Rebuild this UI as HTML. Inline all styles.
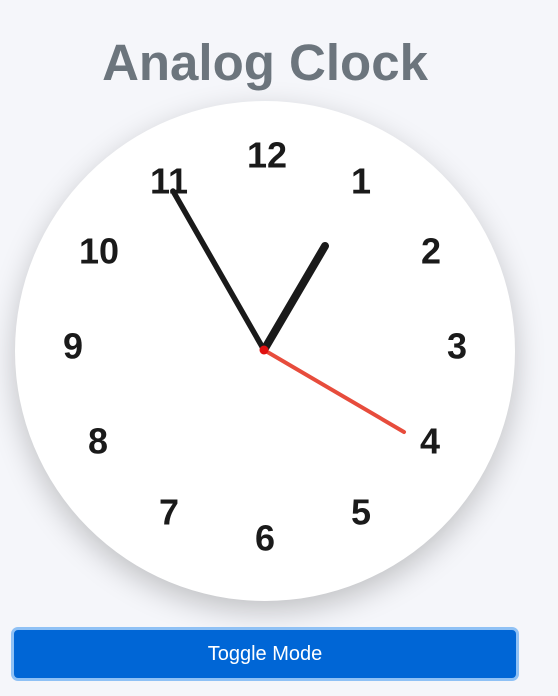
<!DOCTYPE html>
<html><head><style>
body{margin:0;width:558px;height:696px;background:#f5f6fa;font-family:"Liberation Sans",sans-serif;overflow:hidden;position:relative}
h1{position:absolute;top:33px;left:0;width:530px;text-align:center;margin:0;font-size:51px;font-weight:bold;color:#6c757d}
.clock{position:absolute;left:15px;top:101px;width:500px;height:500px;border-radius:50%;background:#fff;box-shadow:0 10px 30px rgba(0,0,0,0.22)}
svg{position:absolute;left:0;top:0}
.btn{position:absolute;left:11px;top:627px;width:502px;height:48px;border:3px solid #8fc1f5;border-radius:7px;background:#0066d6;color:#fff;font-size:20px;text-align:center;line-height:48px}
</style></head><body>
<h1>Analog Clock</h1>
<div class="clock"></div>
<svg width="558" height="696">
<g font-family="Liberation Sans, sans-serif" font-weight="bold" font-size="36" fill="#1a1a1a" text-anchor="middle" dominant-baseline="central">
<text x="267" y="155">12</text><text x="361" y="181">1</text><text x="431" y="251">2</text><text x="457" y="346">3</text><text x="430" y="441">4</text><text x="361" y="512">5</text><text x="265" y="538">6</text><text x="169" y="512">7</text><text x="98" y="441">8</text><text x="73" y="346">9</text><text x="99" y="251">10</text><text x="169" y="181">11</text>
</g>
<line x1="264" y1="350" x2="325" y2="246" stroke="#1a1a1a" stroke-width="8" stroke-linecap="round"/>
<line x1="264" y1="350" x2="173" y2="191" stroke="#1a1a1a" stroke-width="5.5" stroke-linecap="round"/>
<line x1="264" y1="350" x2="404" y2="432" stroke="#e74c3c" stroke-width="4" stroke-linecap="round"/>
<circle cx="264" cy="350" r="4.5" fill="#e01010"/>
</svg>
<div class="btn">Toggle Mode</div>
</body></html>
